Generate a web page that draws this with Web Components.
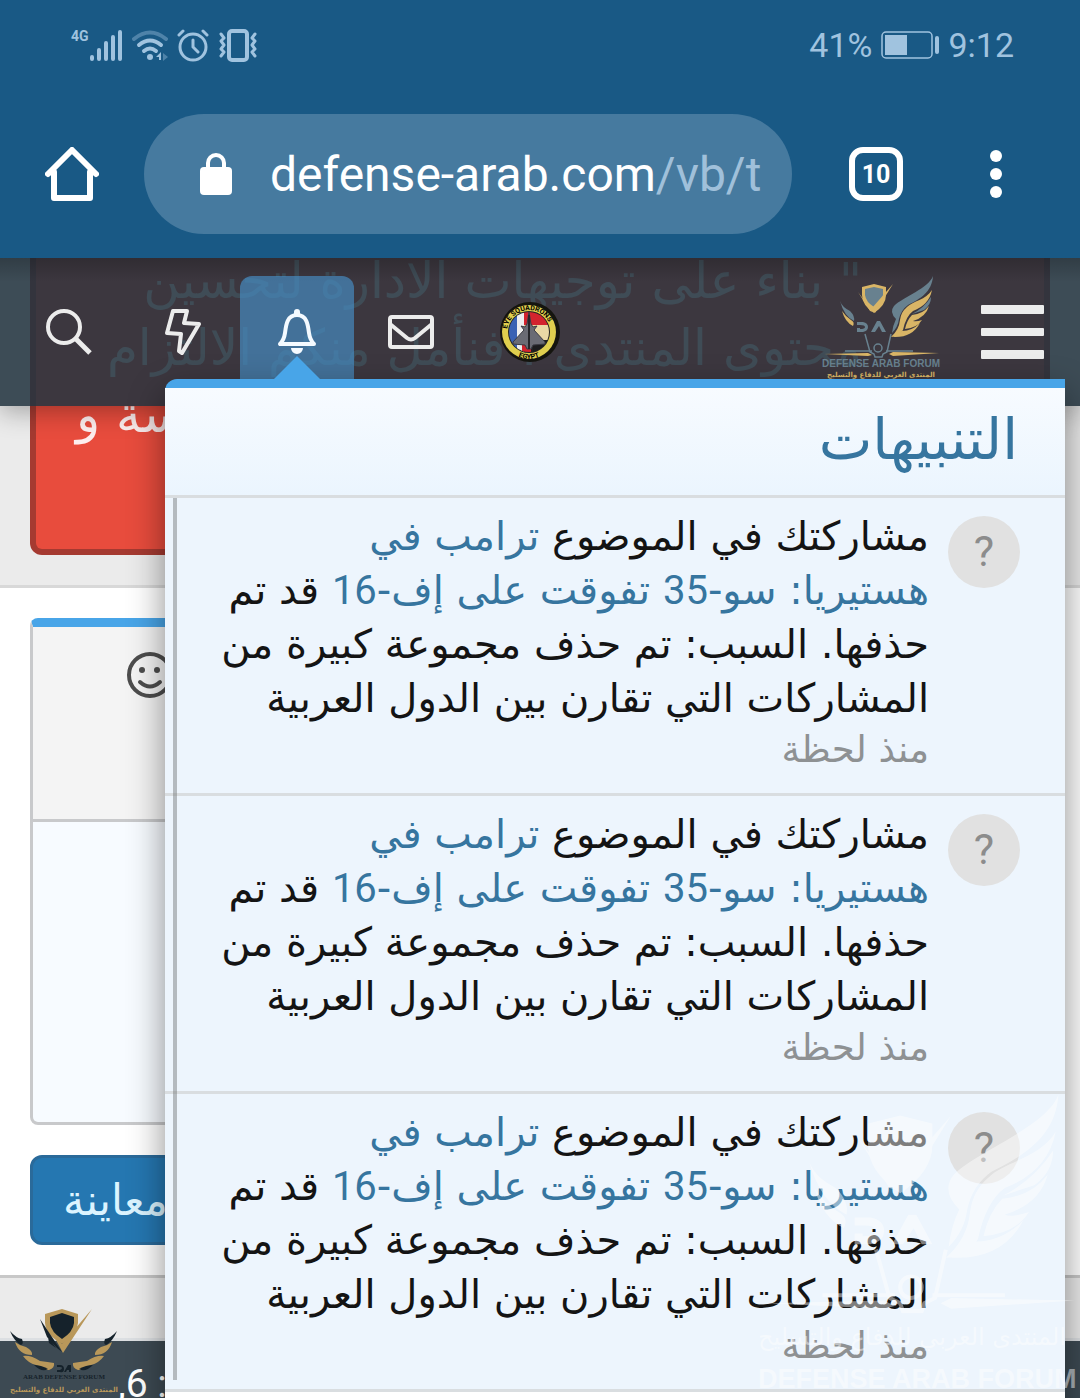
<!DOCTYPE html>
<html lang="ar">
<head>
<meta charset="utf-8">
<meta name="viewport" content="width=device-width, initial-scale=1">
<title>التنبيهات</title>
<style>
    body { margin: 0; font-family: Roboto, "DejaVu Sans", sans-serif; }
</style>
</head>
<body>
<forum-app></forum-app>

<script>
// shared icon shapes, all stroked or filled with currentColor
const ICONS = {
    signal: { box: '0 0 34 34', body: '<g stroke="currentColor" stroke-width="4" stroke-linecap="round"><path d="M3 29v2M10 22v9M17 15v16M24 9v22M31 4v27"/></g>' },
    wifi: { box: '0 0 36 34', body: '<g fill="none" stroke="currentColor" stroke-width="4" stroke-linecap="round"><path opacity=".4" d="M2 11q16-13 32 0"/><path d="M7 17q11-9 22 0M12 23q6-5 12 0"/></g><circle cx="18" cy="29" r="3" fill="currentColor"/><path d="M29 24v8h-2v-3h-3z" fill="currentColor"/><path d="M31 25l5 4-5 4z" fill="currentColor" opacity=".4"/>' },
    alarm: { box: '0 0 32 34', body: '<g fill="none" stroke="currentColor" stroke-width="3" stroke-linecap="round"><circle cx="16" cy="19" r="13"/><path d="M16 12v7l5 5M2 7l4-4M30 7l-4-4"/></g>' },
    vibrate: { box: '0 0 40 34', body: '<g fill="none" stroke="currentColor" stroke-width="3"><rect x="11" y="3" width="18" height="29" rx="3" stroke-width="4"/><path d="M3 6l3 4-3 3 3 4-3 4 3 3-3 4M37 6l-3 4 3 3-3 4 3 4-3 3 3 4" stroke-linecap="round" stroke-linejoin="round"/></g>' },
    battery: { box: '0 0 58 28', body: '<rect x="1" y="1" width="50" height="26" rx="4" fill="none" stroke="currentColor" stroke-width="1.5"/><rect x="4" y="4" width="22" height="20" fill="currentColor"/><rect x="54" y="5" width="4" height="18" rx="2" fill="currentColor"/>' },
    home: { box: '0 0 54 54', body: '<g fill="none" stroke="currentColor" stroke-width="6" stroke-linecap="round" stroke-linejoin="round"><path d="M9 25v26h36V25"/><path d="M3 27L27 3l24 24"/></g>' },
    lock: { box: '0 0 32 42', body: '<rect y="14" width="32" height="28" rx="4" fill="currentColor"/><path d="M8 16v-6a8 8 0 0 1 16 0v6" fill="none" stroke="currentColor" stroke-width="4"/>' },
    dots: { box: '0 0 12 48', body: '<g fill="currentColor"><circle cx="6" cy="6" r="6"/><circle cx="6" cy="24" r="6"/><circle cx="6" cy="42" r="6"/></g>' },
    search: { box: '0 0 46 46', body: '<g fill="none" stroke="currentColor"><circle cx="18" cy="18" r="16" stroke-width="4"/><path d="M30 30l14 14" stroke-width="5"/></g>' },
    bolt: { box: '0 0 36 46', body: '<path d="M8 2h14l-3 12 15 1-17 29-3-2 2-17-14-1z" fill="none" stroke="currentColor" stroke-width="4" stroke-linejoin="round"/>' },
    bell: { box: '0 0 40 46', body: '<path d="M20 6C10 6 9 16 8 24q-1 7-5 11h34q-4-4-5-11C31 16 30 6 20 6z" fill="none" stroke="currentColor" stroke-width="4" stroke-linejoin="round"/><path d="M17 6V3a3 3 0 0 1 6 0v3zM14 39h12a6 6 0 0 1-12 0z" fill="currentColor"/>' },
    mail: { box: '0 0 46 34', body: '<g fill="none" stroke="currentColor" stroke-width="4" stroke-linejoin="round"><rect x="2" y="2" width="42" height="30" rx="2"/><path d="M2 9l17 14q4 3 8 0L44 9"/></g>' },
    menu: { box: '0 0 63 54', body: '<g fill="currentColor"><rect width="63" height="9" rx="1"/><rect y="23" width="63" height="8" rx="1"/><rect y="45" width="63" height="9" rx="1"/></g>' },
    smile: { box: '0 0 48 48', body: '<circle cx="24" cy="24" r="21" fill="none" stroke="currentColor" stroke-width="4"/><circle cx="16" cy="19" r="3" fill="currentColor"/><circle cx="31" cy="19" r="3" fill="currentColor"/><path d="M14 31q10 9 20 0" fill="none" stroke="currentColor" stroke-width="4" stroke-linecap="round"/>' }
};

class UiIcon extends HTMLElement {
    connectedCallback() {
        const icon = ICONS[this.getAttribute('name')];
        const [, , w, h] = icon.box.split(' ');
        this.attachShadow({ mode: 'open' }).innerHTML = `
            <style>
                :host { display: block; flex: none; }
                svg { display: block; }
            </style>
            <svg viewBox="${icon.box}" width="${w}" height="${h}" aria-hidden="true">${icon.body}</svg>
        `;
    }
}
customElements.define('ui-icon', UiIcon);

class PhoneStatus extends HTMLElement {
    connectedCallback() {
        this.attachShadow({ mode: 'open' }).innerHTML = `
            <style>
                :host {
                    display: flex; justify-content: space-between; align-items: center;
                    height: 90px; box-sizing: border-box; padding: 0 66px 0 71px;
                    background: #195985; color: #a0c3df; font-size: 34px;
                }
                .group { display: flex; align-items: center; gap: 9px; }
                .net { display: flex; align-items: flex-start; }
                .net span { width: 18px; font-size: 14px; line-height: 16px; font-weight: 700; }
            </style>
            <div class="group">
                <div class="net"><span>4G</span><ui-icon name="signal"></ui-icon></div>
                <ui-icon name="wifi"></ui-icon>
                <ui-icon name="alarm"></ui-icon>
                <ui-icon name="vibrate"></ui-icon>
            </div>
            <div class="group">
                <span>41%</span>
                <ui-icon name="battery"></ui-icon>
                <span>9:12</span>
            </div>
        `;
    }
}
customElements.define('phone-status', PhoneStatus);

class BrowserBar extends HTMLElement {
    connectedCallback() {
        this.attachShadow({ mode: 'open' }).innerHTML = `
            <style>
                :host {
                    display: flex; align-items: center; height: 168px;
                    background: #195985; color: #fff;
                }
                button { flex: none; box-sizing: border-box; background: none; border: 0; padding: 0; color: inherit; font: inherit; }
                .home { width: 144px; display: flex; justify-content: center; }
                .address {
                    flex: 1; min-width: 0; height: 120px; border-radius: 60px; background: #467a9f;
                    display: flex; align-items: center; gap: 38px; padding: 0 32px 0 56px;
                    font-size: 48px; text-align: left; white-space: nowrap;
                }
                .address i { font-style: normal; color: #a0c0da; }
                .tabs {
                    width: 54px; height: 54px; margin: 0 0 0 57px;
                    border: 6px solid #fff; border-radius: 14px; font-size: 25px; font-weight: 700;
                }
                .more { width: 177px; display: flex; justify-content: center; padding-left: 9px; }
            </style>
            <button class="home" aria-label="Home"><ui-icon name="home"></ui-icon></button>
            <button class="address"><ui-icon name="lock"></ui-icon><span>defense-arab.com<i>/vb/t</i></span></button>
            <button class="tabs" aria-label="Tabs">10</button>
            <button class="more" aria-label="More"><ui-icon name="dots"></ui-icon></button>
        `;
    }
}
customElements.define('browser-bar', BrowserBar);

// winged shield; colours come from --gold and --steel
class EagleMark extends HTMLElement {
    connectedCallback() {
        this.attachShadow({ mode: 'open' }).innerHTML = `
            <style>
                :host { display: block; }
                svg { display: block; width: 100%; }
                .g { fill: var(--gold, #d9b566); }
                .s { fill: var(--steel, #68818f); }
                .line { fill: none; stroke: var(--steel, #68818f); stroke-width: 1.5; }
            </style>
            <svg viewBox="0 4 120 82" aria-hidden="true">
                <path class="g" d="M41 15l12-3 12 3v8q0 10-12 18-12-8-12-18z"/>
                <path class="s" d="M44 17l9-2 9 2v6q-1 7-9 12-8-5-9-12z"/>
                <path class="g" d="M72 12L54 41l-3-5zM37 20l15 20-3-1z"/>
                <path class="s" d="M112 4C108 16 82 25 73 34q-5 6 2 13-3 6-4 14 6-6 7-14 2-9 9-14C99 27 111 20 112 4z"/>
                <path class="g" d="M111 18C105 28 92 29 86 35q-6 5-7 13-1 10-9 17 8 0 12-7 3-14 10-19 16-6 19-21z"/>
                <path class="s" d="M110 25q0 8-7 13l-12 4q12-6 19-17z"/>
                <path class="g" d="M108 34q-6 8-17 9-5 5-7 14 12-1 17-9-6 2-9 1 13-4 16-15z"/>
                <path class="g" d="M99 51q-8 8-18 8l-9 6q19 1 27-14z"/>
                <path class="s" d="M19 29q2 6 10 10 5 5 4 10-10-5-14-20z"/>
                <path class="g" d="M21 39q4 6 9 9 4 2 2 6-8-4-11-15z"/>
                <path class="s" d="M36 50h6q5 1 5 5t-5 5h-6v-4h3v1q5 0 5-2t-5-2h-3zM50 60l6-11h3l6 11h-4l-3-6-4 6z"/>
                <path class="line" d="M44 62l5 18 4 2 1 3h7l1-3 4-2 4-18M24 79h27M65 79h27"/>
                <circle class="line" cx="57" cy="76" r="4"/>
                <path class="g" d="M3 82l44-1 4 2-4 1zM118 81l-46-1-4 2 4 2z"/>
            </svg>
        `;
    }
}
customElements.define('eagle-mark', EagleMark);

class ForumNav extends HTMLElement {
    connectedCallback() {
        this.attachShadow({ mode: 'open' }).innerHTML = `
            <style>
                :host {
                    display: flex; align-items: center; height: 148px; box-sizing: border-box;
                    padding: 0 36px 0 12px; color: #ececec;
                    background: linear-gradient(rgba(0, 0, 0, .2), transparent 24px), rgba(35, 52, 63, .87);
                    box-shadow: 0 6px 24px rgba(0, 0, 0, .3);
                }
                button {
                    width: 114px; height: 112px; padding: 0; border: 0; background: none; color: inherit;
                    display: flex; align-items: center; justify-content: center;
                }
                button.on { background: rgba(71, 145, 202, .65); border-radius: 12px 12px 0 0; color: #f4faff; }
                .badge { width: 124px; }
                .badge svg text { font: 700 7px Roboto, sans-serif; }
                .logo {
                    width: 120px; height: 112px; margin-left: auto; text-align: center; white-space: nowrap;
                    color: #68818f; text-decoration: none; font: 700 10px/12px "Liberation Sans", sans-serif;
                }
                .logo span { display: block; color: #d9b566; font: 700 7px/10px "DejaVu Sans", sans-serif; }
                .menu { width: 63px; margin-left: 40px; }
            </style>
            <button aria-label="بحث"><ui-icon name="search"></ui-icon></button>
            <button aria-label="الجديد"><ui-icon name="bolt"></ui-icon></button>
            <button class="on" aria-label="التنبيهات"><ui-icon name="bell"></ui-icon></button>
            <button aria-label="المحادثات"><ui-icon name="mail"></ui-icon></button>
            <button class="badge" aria-label="الحساب">
                <svg width="62" height="62" viewBox="0 0 62 62">
                    <defs>
                        <clipPath id="disc"><circle cx="30" cy="31" r="20"/></clipPath>
                        <path id="top" d="M8 31a22 22 0 0 1 44 0"/>
                        <path id="low" d="M3 31a27 27 0 0 0 54 0"/>
                    </defs>
                    <circle cx="31" cy="31" r="30" fill="#15150f"/>
                    <circle cx="30" cy="31" r="27" fill="#e0cf4e"/>
                    <circle cx="30" cy="31" r="21" fill="#222"/>
                    <g clip-path="url(#disc)">
                        <path fill="#3a62b4" d="M8 8h10v46H8z"/>
                        <path fill="#eee" d="M18 8h7v46h-7z"/>
                        <path fill="#d3232e" d="M25 8h30v16H25z"/>
                        <path fill="#ead9a5" d="M25 24h30v15H25z"/>
                        <path fill="#d3232e" d="M23 38h9v16h-9z"/>
                        <path fill="#1c1c1e" d="M34 40h21v16H34z"/>
                    </g>
                    <path fill="#6a6b74" stroke="#3a3a42" d="M30 11l2 12 2 3 4-1-3 4 11 12v2l-12 1-2 4h-4l-2-4-12-1v-2l11-12-3-4 4 1 2-3z"/>
                    <path stroke="#26262b" stroke-width="2" d="M30 14v34"/>
                    <text><textPath href="#top" startOffset="3">EYE SQUADRONS</textPath></text>
                    <text text-anchor="middle"><textPath href="#low" startOffset="50%">EGYPT</textPath></text>
                </svg>
            </button>
            <a class="logo" href="#"><eagle-mark></eagle-mark>DEFENSE ARAB FORUM<span>المنتدى العربي للدفاع والتسليح</span></a>
            <button class="menu" aria-label="القائمة"><ui-icon name="menu"></ui-icon></button>
        `;
    }
}
customElements.define('forum-nav', ForumNav);

class AlertItem extends HTMLElement {
    connectedCallback() {
        this.attachShadow({ mode: 'open' }).innerHTML = `
            <style>
                :host {
                    display: flex; gap: 19px; padding: 11px 45px 18px 12px;
                    background: #edf5fd; border-bottom: 3px solid #d9dde0; color: #141414;
                }
                .avatar {
                    flex: none; width: 72px; height: 72px; margin-top: 7px; border-radius: 50%;
                    background: #e1e1e1; color: #8c8c8c; font-size: 43px; line-height: 70px; text-align: center;
                }
                .text { flex: 1; font: 40px/54px "DejaVu Sans", sans-serif; white-space: nowrap; }
                time { display: block; font-size: 37px; line-height: 50px; color: #8e9193; }
            </style>
            <div class="avatar">?</div>
            <div class="text"><slot></slot><time>${this.getAttribute('time')}</time></div>
        `;
    }
}
customElements.define('alert-item', AlertItem);

class AlertsMenu extends HTMLElement {
    connectedCallback() {
        this.attachShadow({ mode: 'open' }).innerHTML = `
            <style>
                :host {
                    display: block; border-top: 9px solid #48a5e8; border-radius: 12px 0 0 0;
                    background: #fff; box-shadow: 0 15px 36px rgba(0, 0, 0, .45);
                }
                /* pointer under the bell tab */
                :host::before {
                    content: ""; position: absolute; left: 108px; bottom: 100%; margin-bottom: 8px;
                    border: 24px solid transparent; border-top: 0; border-bottom-color: #48a5e8;
                }
                h3 {
                    margin: 0; padding: 0 47px; height: 107px; line-height: 102px;
                    font-family: "DejaVu Sans", sans-serif; font-size: 57px;
                    font-weight: 400; color: #36759f; border-bottom: 3px solid #d9dde0;
                    background: linear-gradient(#f7fbff, #ebf5fe);
                }
                .list { position: relative; }
                .list::after {
                    content: ""; position: absolute; left: 8px; top: 0; bottom: 12px; width: 4px;
                    background: rgba(110, 115, 115, .45);
                }
                .foot { height: 120px; }
                a { color: #36759f; text-decoration: none; }
                .num { font-family: Roboto, sans-serif; line-height: 1; }
            </style>
            <h3>التنبيهات</h3>
            <div class="list">
                ${[1, 2, 3].map(() => `
                    <alert-item time="منذ لحظة">مشاركتك في الموضوع <a href="#">ترامب في<br>هستيريا: سو-<span class="num">35</span> تفوقت على إف-<span class="num">16</span></a> قد تم<br>حذفها. السبب: تم حذف مجموعة كبيرة من<br>المشاركات التي تقارن بين الدول العربية</alert-item>
                `).join('')}
            </div>
            <div class="foot"></div>
        `;
    }
}
customElements.define('alerts-menu', AlertsMenu);

class SiteBadge extends HTMLElement {
    connectedCallback() {
        this.attachShadow({ mode: 'open' }).innerHTML = `
            <style>
                :host { display: block; width: 110px; text-align: center; white-space: nowrap; }
                svg { display: block; }
                b { display: block; font: 700 7px/9px "Liberation Serif", serif; color: #17232b; }
                span { display: block; font: 700 7px/16px "DejaVu Sans", sans-serif; color: #b9985a; }
            </style>
            <svg width="110" height="65" viewBox="0 0 110 65" aria-hidden="true">
                <path fill="#b9985a" d="M36 6l17-5 16 5v9q-1 12-16 21-16-9-17-21z"/>
                <path fill="#15222b" d="M41 9l12-4 12 4v6q-1 9-12 16-11-7-12-16z"/>
                <path fill="#15222b" d="M31 11l22 33-5-4-10-11zM39 29l8 11-7-5z"/>
                <path fill="#b9985a" d="M83 1L54 45l-8-15 7 6z"/>
                <g id="wing">
                    <path fill="#15222b" d="M1 23q6 7 12 8 2 5-1 6Q5 33 1 23z"/>
                    <path fill="#b9985a" d="M6 34q5 4 11 5 7 4 6 8-13 0-17-13z"/>
                    <path fill="#b9985a" d="M14 48q8-1 17 5 8 1 14 2 1 5-5 7-7 0-13-5-8-2-13-9z"/>
                    <path fill="#15222b" d="M25 57q7 0 14 4-6 4-14-4z"/>
                </g>
                <use href="#wing" transform="matrix(-1 0 0 1 109 0)"/>
                <path fill="#15222b" d="M48 57h3q4 0 4 4t-4 3h-3v-2h3q2-1 2-2t-2-1h-3zM55 64l4-7h3v7h-2v-2h-2l-1 2z"/>
            </svg>
            <b>ARAB DEFENSE FORUM</b>
            <span>المنتدى العربي للدفاع والتسليح</span>
        `;
    }
}
customElements.define('site-badge', SiteBadge);

class ForumPage extends HTMLElement {
    connectedCallback() {
        this.attachShadow({ mode: 'open' }).innerHTML = `
            <style>
                :host { display: flex; flex-direction: column; position: relative; background: #ebebeb; }
                forum-nav { position: absolute; inset: 0 0 auto; }
                alerts-menu { position: absolute; top: 121px; left: 165px; right: 15px; }
                .notice-area { flex: none; padding: 0 30px 30px; border-bottom: 3px solid #d8d8d8; }
                .notice {
                    height: 297px; box-sizing: border-box; padding: 0 182px 0 40px; overflow: hidden;
                    border: 6px solid #a53a31; border-top: 0; border-radius: 0 0 12px 12px;
                    background: #e84c3d; color: #fdeeee; font: 50px/67px "DejaVu Sans", sans-serif; white-space: nowrap;
                }
                .notice p { margin: 0; }
                /* scrolled slightly under the browser bar */
                .notice p:first-child { margin-top: -10px; }
                .notice .end { text-align: end; }
                .reply { flex: none; background: #fff; padding: 30px; border-bottom: 3px solid #c8c8c8; }
                .editor {
                    border: 3px solid #c8c9cb; border-top: 9px solid #48a5e8; border-radius: 8px;
                    background: #f7fbff; overflow: hidden;
                }
                .tools { height: 192px; background: #f4f4f4; border-bottom: 3px solid #c8c9cb; }
                .tools button { margin: 24px 0 0 93px; padding: 0; border: 0; background: none; color: #4d4d4d; }
                textarea {
                    display: block; width: 100%; height: 300px; box-sizing: border-box;
                    border: 0; background: none; resize: none;
                }
                .preview {
                    display: block; height: 90px; margin-top: 30px; padding: 0 30px; border: 3px solid #2a6a9a;
                    border-radius: 12px; background: #2577b1; color: #dcf4ff; font: 43px "DejaVu Sans", sans-serif;
                }
                .crumbs { flex: none; height: 60px; border-bottom: 3px solid #dcdfe2; }
                footer {
                    flex: 1; background: #3d4a53; color: #fff; font-size: 39px; line-height: 46px;
                    padding: 20px 0 0 118px; box-sizing: border-box; overflow: hidden;
                }
                site-badge { position: absolute; left: 9px; bottom: 0; }
            </style>
            <section class="notice-area">
                <div class="notice" dir="rtl">
                    <p>" بناء على توجيهات الادارة لتحسين</p>
                    <p>محتوى المنتدى ، فنأمل منكم الالتزام</p>
                    <p class="end">سة و</p>
                </div>
            </section>
            <section class="reply">
                <div class="editor">
                    <div class="tools"><button aria-label="ابتسامات"><ui-icon name="smile"></ui-icon></button></div>
                    <textarea aria-label="الرد"></textarea>
                </div>
                <button class="preview">معاينة</button>
            </section>
            <div class="crumbs"></div>
            <footer>,6 :</footer>
            <site-badge></site-badge>
            <forum-nav></forum-nav>
            <alerts-menu dir="rtl"></alerts-menu>
        `;
    }
}
customElements.define('forum-page', ForumPage);

class ForumApp extends HTMLElement {
    connectedCallback() {
        this.attachShadow({ mode: 'open' }).innerHTML = `
            <style>
                :host { display: flex; flex-direction: column; position: relative; height: 100vh; overflow: hidden; }
                phone-status, browser-bar { flex: none; }
                forum-page { flex: 1; min-height: 0; overflow: hidden; }
                .stamp {
                    position: absolute; right: 0; bottom: 0; width: 322px; opacity: .45; pointer-events: none;
                    --gold: #fff; --steel: #fff; color: #fff; white-space: nowrap;
                    font: 700 27px/38px "Liberation Sans", sans-serif;
                }
                .stamp span { display: block; font: 400 24px/46px "DejaVu Sans", sans-serif; }
            </style>
            <phone-status></phone-status>
            <browser-bar></browser-bar>
            <forum-page></forum-page>
            <div class="stamp"><eagle-mark></eagle-mark><span>المنتدى العربي للدفاع والتسليح</span>DEFENSE ARAB FORUM</div>
        `;
    }
}
customElements.define('forum-app', ForumApp);
</script>
</body>
</html>
